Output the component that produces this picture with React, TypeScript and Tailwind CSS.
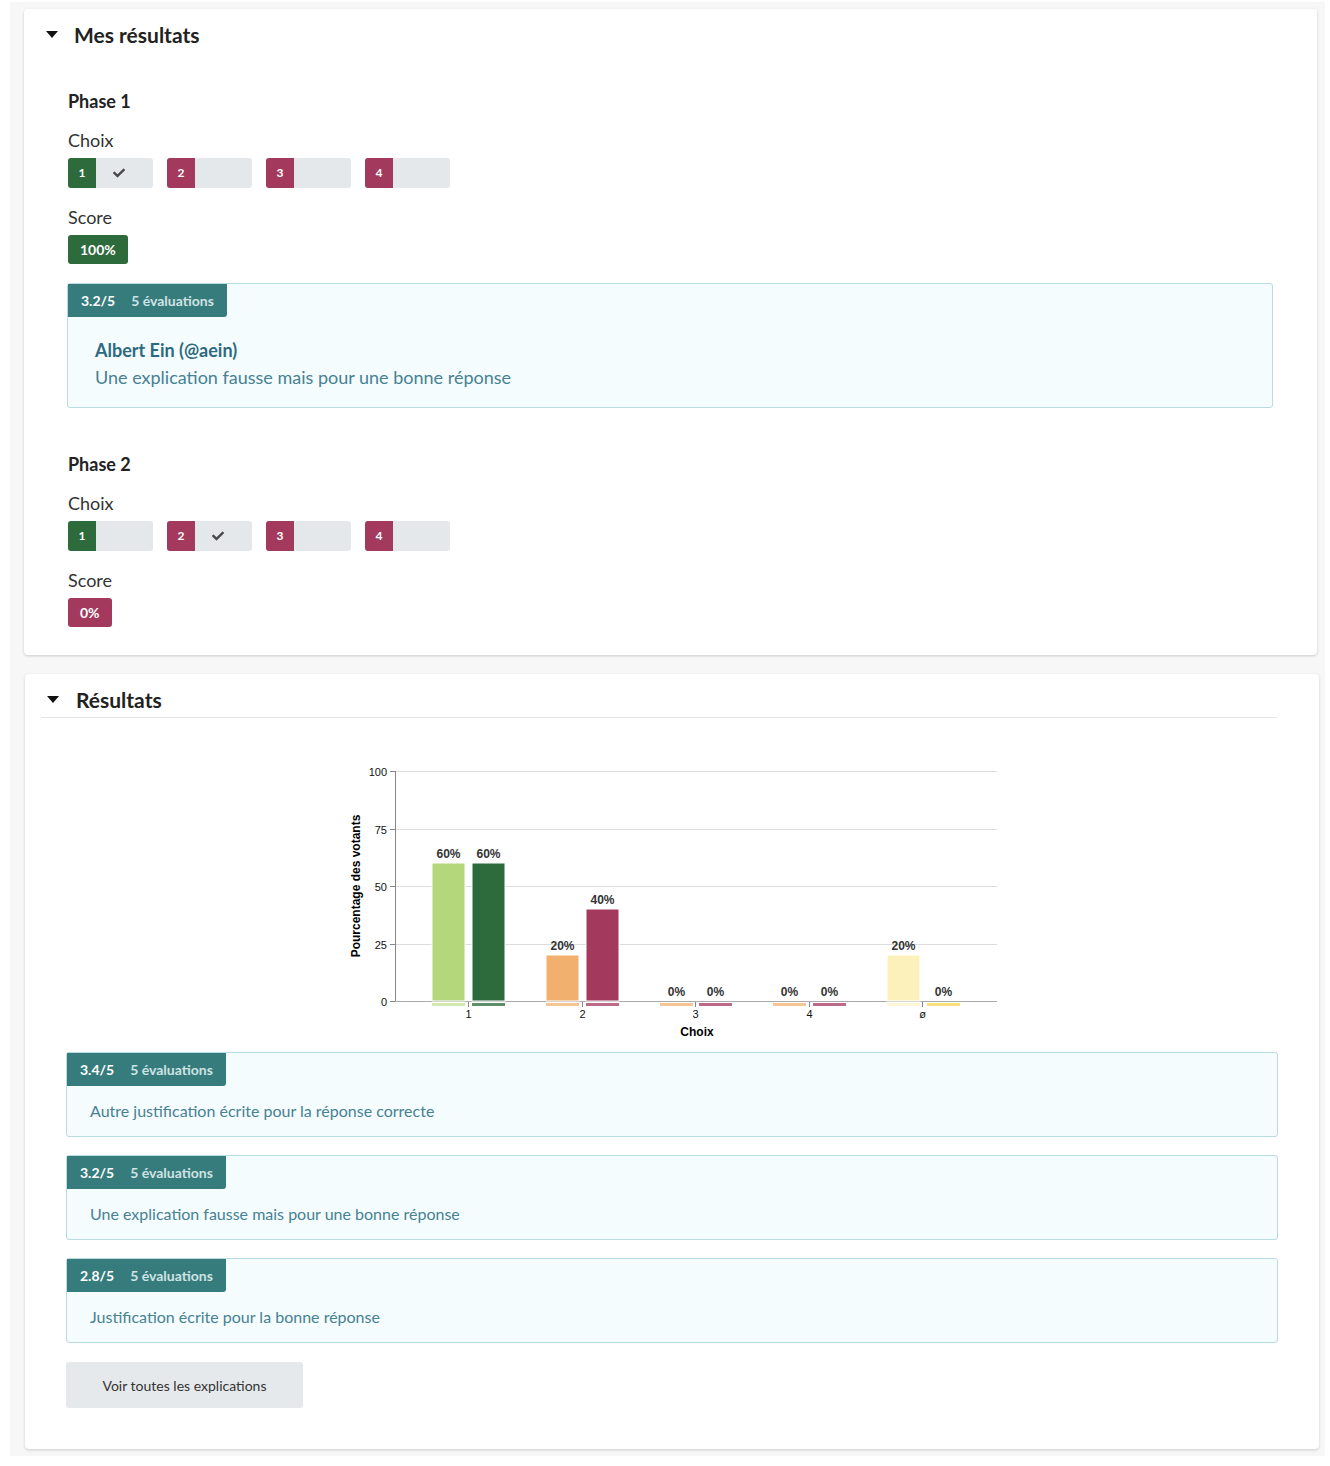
import { FaCheck } from "react-icons/fa";

type Choice = { n: number; correct: boolean; picked: boolean };

const phase1: Choice[] = [
  { n: 1, correct: true, picked: true },
  { n: 2, correct: false, picked: false },
  { n: 3, correct: false, picked: false },
  { n: 4, correct: false, picked: false },
];

const phase2: Choice[] = [
  { n: 1, correct: true, picked: false },
  { n: 2, correct: false, picked: true },
  { n: 3, correct: false, picked: false },
  { n: 4, correct: false, picked: false },
];

const explanations = [
  { score: "3.4/5", text: "Autre justification écrite pour la réponse correcte" },
  { score: "3.2/5", text: "Une explication fausse mais pour une bonne réponse" },
  { score: "2.8/5", text: "Justification écrite pour la bonne réponse" },
];

// x = left edge of each bar, page coordinates
const bars = [
  { x: 432, v: 60, fill: "#b3d77a", strip: "#d3e9b0" },
  { x: 472, v: 60, fill: "#2d6a3c", strip: "#5e8d6a" },
  { x: 546, v: 20, fill: "#f1b06d", strip: "#f5c594" },
  { x: 586, v: 40, fill: "#a3395d", strip: "#bd6a88" },
  { x: 660, v: 0, fill: "#f1b06d", strip: "#f5c594" },
  { x: 699, v: 0, fill: "#a3395d", strip: "#bd6a88" },
  { x: 773, v: 0, fill: "#f1b06d", strip: "#f5c594" },
  { x: 813, v: 0, fill: "#a3395d", strip: "#bd6a88" },
  { x: 887, v: 20, fill: "#fdf1bb", strip: "#fdf5d6" },
  { x: 927, v: 0, fill: "#fbe17d", strip: "#fbe17d" },
];

const groups = [
  { x: 468, label: "1" },
  { x: 582, label: "2" },
  { x: 695, label: "3" },
  { x: 809, label: "4" },
  { x: 922, label: "ø" },
];

function Caret() {
  return (
    <svg width="12" height="8" viewBox="0 0 12 8" className="shrink-0">
      <polygon points="0,0 12,0 6,7" fill="#111" />
    </svg>
  );
}

function ChoiceChips({ choices }: { choices: Choice[] }) {
  return (
    <div className="flex gap-[14px] mt-[6px]">
      {choices.map((c) => (
        <div key={c.n} className="flex w-[85px] h-[30px] rounded-[3px] overflow-hidden bg-[#e5e8eb]">
          <div
            className={
              "w-[28px] flex items-center justify-center text-white text-[12px] font-bold " +
              (c.correct ? "bg-[#2d6a3c]" : "bg-[#a3395d]")
            }
          >
            {c.n}
          </div>
          <div className="flex-1 flex items-center pl-[17px] text-[#4a4a4a]">
            {c.picked && <FaCheck className="w-[12px] h-[12px]" />}
          </div>
        </div>
      ))}
    </div>
  );
}

function Phase({ title, choices, score, ok }: { title: string; choices: Choice[]; score: string; ok: boolean }) {
  return (
    <div>
      <div className="text-[18px] leading-[24px] font-bold text-[#222]">{title}</div>
      <div className="mt-[15px] text-[18px] leading-[24px] text-[#333]">Choix</div>
      <ChoiceChips choices={choices} />
      <div className="mt-[17px] text-[18px] leading-[24px] text-[#333]">Score</div>
      <div
        className={
          "mt-[6px] inline-flex items-center h-[29px] px-[12px] rounded-[3px] text-white text-[14px] font-bold " +
          (ok ? "bg-[#2d6a3c]" : "bg-[#a3395d]")
        }
      >
        {score}
      </div>
    </div>
  );
}

function ScoreTab({ score }: { score: string }) {
  return (
    <div className="inline-flex items-center h-[33px] px-[13px] gap-[16px] bg-[#367c7d] rounded-br-[3px] text-[14px] font-bold">
      <span className="text-white">{score}</span>
      <span className="text-[#cfe3e3]">5 évaluations</span>
    </div>
  );
}

function Chart() {
  const y0 = 1001;
  const k = 2.3;
  return (
    <svg width="654" height="285" viewBox="345 760 654 285" style={{ fontFamily: "'Liberation Sans', Arial, sans-serif" }}>
      {[0, 25, 50, 75, 100].map((t) => {
        const y = Math.round(y0 - t * k) + 0.5;
        return (
          <g key={t}>
            <line x1={395} x2={997} y1={y} y2={y} stroke="#ddd" strokeWidth={1} />
            <line x1={390} x2={395} y1={y} y2={y} stroke="#888" strokeWidth={1} />
            <text x={387} y={y + 4} textAnchor="end" fontSize={11} fill="#111">
              {t}
            </text>
          </g>
        );
      })}
      <line x1={395.5} x2={395.5} y1={771} y2={1001.5} stroke="#888" strokeWidth={1} />
      <line x1={395} x2={997} y1={1001.5} y2={1001.5} stroke="#aaa" strokeWidth={1} />
      {bars.map((b, i) => {
        const h = b.v * k;
        return (
          <g key={i}>
            {h > 0 && <rect x={b.x} y={y0 - h} width={33} height={h} fill={b.fill} stroke="#fff" strokeWidth={1} />}
            <rect x={b.x} y={1003} width={33} height={3} fill={b.strip} />
            <text x={b.x + 16.5} y={y0 - h - 5} textAnchor="middle" fontSize={12} fontWeight="bold" fill="#333">
              {b.v}%
            </text>
          </g>
        );
      })}
      {groups.map((g) => (
        <g key={g.label}>
          <line x1={g.x + 0.5} x2={g.x + 0.5} y1={1002} y2={1007} stroke="#888" strokeWidth={1} />
          <text x={g.x + 0.5} y={1018} textAnchor="middle" fontSize={11} fill="#111">
            {g.label}
          </text>
        </g>
      ))}
      <text x={697} y={1036} textAnchor="middle" fontSize={12} fontWeight="bold" fill="#000">
        Choix
      </text>
      <text
        x={0}
        y={0}
        transform="translate(360 886) rotate(-90)"
        textAnchor="middle"
        fontSize={12}
        fontWeight="bold"
        fill="#000"
      >
        Pourcentage des votants
      </text>
    </svg>
  );
}

export default function App() {
  return (
    <div className="min-h-[1466px] bg-white pt-[2px]" style={{ fontFamily: "Lato, 'Liberation Sans', sans-serif" }}>
      <div className="ml-[10px] w-[1315px] bg-[#f7f7f7] pl-[14px] pr-[8px] pt-[7px] pb-[7px]">
        {/* Mes résultats */}
        <section className="bg-white rounded-[4px] shadow-[0_1px_3px_rgba(0,0,0,0.18)] pt-[12px] pb-[28px]">
          <div className="flex items-center h-[28px] pl-[22px]">
            <Caret />
            <h2 className="ml-[16px] text-[21px] font-bold text-[#222]">Mes résultats</h2>
          </div>
          <div className="pl-[44px] pr-[44px] mt-[40px]">
            <Phase title="Phase 1" choices={phase1} score="100%" ok />
            <div className="-ml-px mt-[19px] border border-[#b8dce2] rounded-[3px] bg-[#f5fcfd]">
              <ScoreTab score="3.2/5" />
              <div className="pl-[27px] pt-[21px] pb-[18px]">
                <div className="text-[18px] leading-[24px] font-bold text-[#2d6a80]">Albert Ein (@aein)</div>
                <div className="mt-[3px] text-[18px] leading-[24px] text-[#468194]">
                  Une explication fausse mais pour une bonne réponse
                </div>
              </div>
            </div>
            <div className="mt-[44px]">
              <Phase title="Phase 2" choices={phase2} score="0%" ok={false} />
            </div>
          </div>
        </section>

        {/* Résultats */}
        <section className="mt-[19px] ml-px -mr-[2px] bg-white rounded-[4px] shadow-[0_1px_3px_rgba(0,0,0,0.18)] pt-[12px] pb-[41px]">
          <div className="ml-[16px] mr-[42px] border-b border-[#e6e6e6] pb-[3px]">
            <div className="flex items-center h-[28px] pl-[6px]">
              <Caret />
              <h2 className="ml-[17px] text-[21px] font-bold text-[#222]">Résultats</h2>
            </div>
          </div>
          <div className="flex justify-center mt-[42px]">
            <Chart />
          </div>
          <div className="px-[41px] mt-[7px] flex flex-col gap-[18px]">
            {explanations.map((e) => (
              <div key={e.score} className="border border-[#b8dce2] rounded-[3px] bg-[#f5fcfd]">
                <ScoreTab score={e.score} />
                <div className="pl-[23px] pt-[13px] pb-[13px] text-[16px] leading-[24px] text-[#468194]">{e.text}</div>
              </div>
            ))}
            <div className="mt-px">
              <button className="w-[237px] h-[46px] rounded-[3px] bg-[#e6e9ec] text-[14px] text-[#333]">
                Voir toutes les explications
              </button>
            </div>
          </div>
        </section>
      </div>
    </div>
  );
}
